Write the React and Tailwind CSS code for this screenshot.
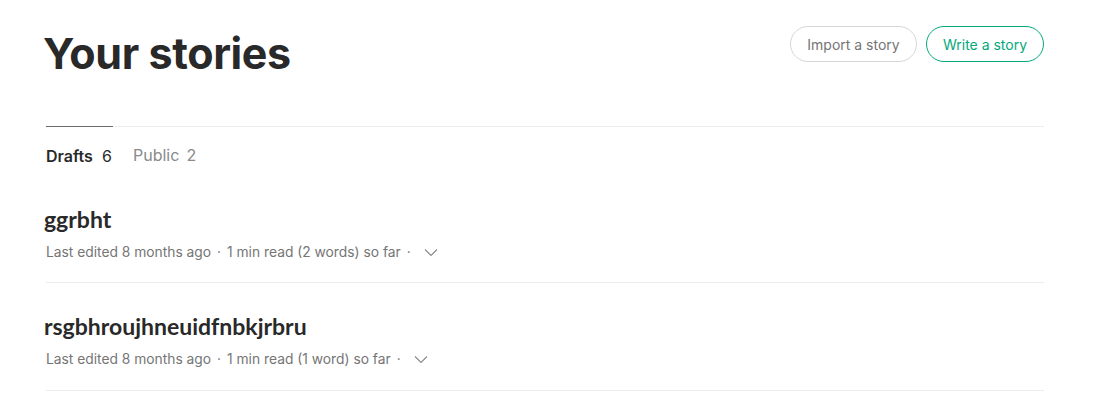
const STORIES = [
  { id: 1, title: 'ggrbht', words: '2 words' },
  { id: 2, title: 'rsgbhroujhneuidfnbkjrbru', words: '1 word' },
];

function Chevron() {
  return (
    <svg width="14" height="9" viewBox="0 0 14 9" fill="none" className="ml-[7px]">
      <path d="M1 1.5l6 6 6-6" stroke="#8a8a8a" strokeWidth="1.1" />
    </svg>
  );
}

export default function App() {
  return (
    <div className="min-h-[401px] bg-white font-['Inter',sans-serif] text-[#292929]">
      <div className="ml-[46px] w-[998px]">
        {/* Header */}
        <div className="flex items-start justify-between pt-[26px]">
          <h1 className="-ml-[3px] text-[43px] leading-[54px] font-bold tracking-[-0.4px] text-[#292929]">Your stories</h1>
          <div className="flex items-center gap-[9px]">
            <button className="h-[36px] w-[127px] rounded-full border border-[#d6d6d6] text-[14px] text-[#757575]">
              Import a story
            </button>
            <button className="h-[36px] w-[118px] rounded-full border border-[#03a87c] text-[14px] text-[#03a87c]">
              Write a story
            </button>
          </div>
        </div>

        {/* Tabs */}
        <div className="mt-[46px] border-t border-[#ececec]">
          <div className="flex gap-[20px]">
            <div className="-mt-px w-[67px] border-t border-[#6b6b6b] pt-[17px]">
              <span className="text-[16px] font-semibold text-[#292929]">Drafts</span>
              <span className="ml-[9px] text-[16px] text-[#292929]">6</span>
            </div>
            <div className="pt-[16px]">
              <span className="text-[16px] text-[#8a8a8a]">Public</span>
              <span className="ml-[7px] text-[16px] text-[#8a8a8a]">2</span>
            </div>
          </div>
        </div>

        {/* Stories */}
        <div className="mt-[36px]">
          {STORIES.map((story, i) => (
            <div key={story.id} className={`border-b border-[#ececec] ${i === 0 ? 'pb-[19px]' : 'pt-[28px] pb-[21px]'}`}>
              <h3 className="-ml-[2px] font-['Lato',sans-serif] text-[23px] leading-[30px] font-bold text-[#292929]">
                {story.title}
              </h3>
              <div className="mt-[8px] flex items-center text-[13.8px] text-[#757575]">
                <span>Last edited 8 months ago</span>
                <span className="mx-[6px]">·</span>
                <span>1 min read ({story.words}) so far</span>
                <span className="mx-[6px]">·</span>
                <Chevron />
              </div>
            </div>
          ))}
        </div>
      </div>
    </div>
  );
}
